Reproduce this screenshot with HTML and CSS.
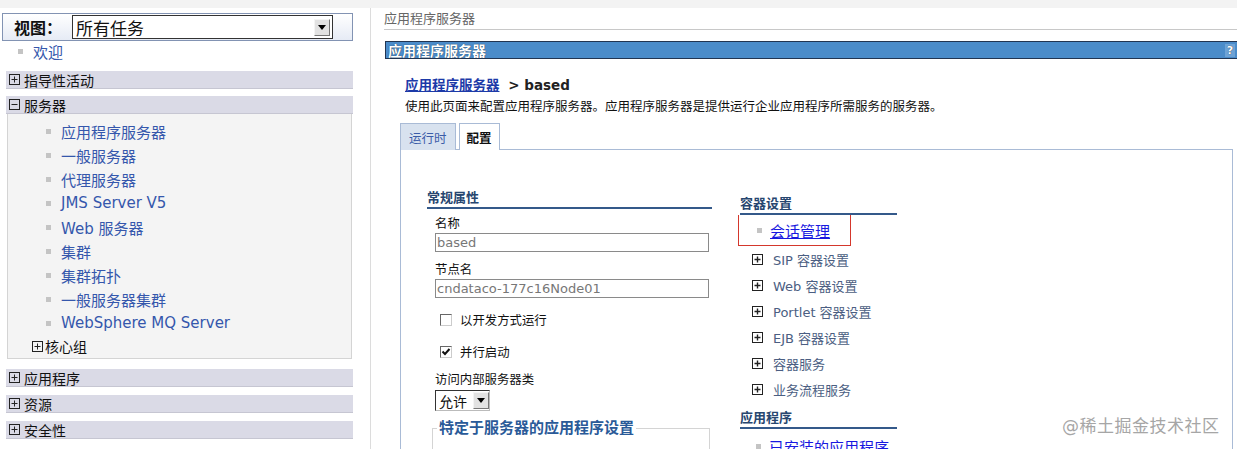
FILE: index.html
```html
<!DOCTYPE html>
<html>
<head>
  <title>应用程序服务器</title>
  <link rel="stylesheet" href="styles.css">
</head>
<body>
  <div class="topstrip"></div>
  <div class="page">
    <div class="nav">
      <div class="viewbar">
        <span class="viewlabel">视图：</span>
        <div class="viewselect">
          <span>所有任务</span>
          <span class="arrowbtn"><svg width="8" height="5" viewBox="0 0 8 5"><path d="M0 0h8L4 5z" fill="#000"/></svg></span>
        </div>
      </div>
      <div class="welcome"><span class="bullet"></span><a>欢迎</a></div>

      <div class="group gap"><svg class="box" viewBox="0 0 11 11"><rect x="0.5" y="0.5" width="10" height="10" fill="none" stroke="#222"/><path d="M2.5 5.5h6M5.5 2.5v6" stroke="#222"/></svg>指导性活动</div>
      <div class="group open"><svg class="box" viewBox="0 0 11 11"><rect x="0.5" y="0.5" width="10" height="10" fill="none" stroke="#222"/><path d="M2.5 5.5h6" stroke="#222"/></svg>服务器</div>
      <div class="groupbody">
        <div class="item"><span class="bullet"></span><a>应用程序服务器</a></div>
        <div class="item"><span class="bullet"></span><a>一般服务器</a></div>
        <div class="item"><span class="bullet"></span><a>代理服务器</a></div>
        <div class="item"><span class="bullet"></span><a>JMS Server V5</a></div>
        <div class="item"><span class="bullet"></span><a>Web 服务器</a></div>
        <div class="item"><span class="bullet"></span><a>集群</a></div>
        <div class="item"><span class="bullet"></span><a>集群拓扑</a></div>
        <div class="item"><span class="bullet"></span><a>一般服务器集群</a></div>
        <div class="item"><span class="bullet"></span><a>WebSphere MQ Server</a></div>
        <div class="subgroup"><svg class="box" viewBox="0 0 11 11"><rect x="0.5" y="0.5" width="10" height="10" fill="none" stroke="#222"/><path d="M2.5 5.5h6M5.5 2.5v6" stroke="#222"/></svg>核心组</div>
      </div>
      <div class="group after"><svg class="box" viewBox="0 0 11 11"><rect x="0.5" y="0.5" width="10" height="10" fill="none" stroke="#222"/><path d="M2.5 5.5h6M5.5 2.5v6" stroke="#222"/></svg>应用程序</div>
      <div class="group"><svg class="box" viewBox="0 0 11 11"><rect x="0.5" y="0.5" width="10" height="10" fill="none" stroke="#222"/><path d="M2.5 5.5h6M5.5 2.5v6" stroke="#222"/></svg>资源</div>
      <div class="group"><svg class="box" viewBox="0 0 11 11"><rect x="0.5" y="0.5" width="10" height="10" fill="none" stroke="#222"/><path d="M2.5 5.5h6M5.5 2.5v6" stroke="#222"/></svg>安全性</div>
    </div>

    <div class="main">
      <div class="crumb">应用程序服务器</div>
      <div class="titlebar"><span>应用程序服务器</span><span class="help">?</span></div>
      <div class="content">
        <div class="heading"><a>应用程序服务器</a> &gt; based</div>
        <div class="desc">使用此页面来配置应用程序服务器。应用程序服务器是提供运行企业应用程序所需服务的服务器。</div>
        <div class="tabs">
          <span class="tab">运行时</span>
          <span class="tab active">配置</span>
        </div>
        <div class="panel">
          <div class="colleft">
            <div class="sectitle">常规属性</div>
            <div class="flabel first">名称</div>
            <div class="textbox">based</div>
            <div class="flabel">节点名</div>
            <div class="textbox">cndataco-177c16Node01</div>
            <div class="check first"><span class="cb"></span>以开发方式运行</div>
            <div class="check"><span class="cb"><svg width="10" height="10" viewBox="0 0 10 10"><path d="M1.5 4.5l2.5 2.5 4.5-5" fill="none" stroke="#111" stroke-width="2"/></svg></span>并行启动</div>
            <div class="flabel third">访问内部服务器类</div>
            <div class="smallselect"><span>允许</span><span class="arrowbtn"><svg width="8" height="5" viewBox="0 0 8 5"><path d="M0 0h8L4 5z" fill="#000"/></svg></span></div>
            <fieldset class="appset">
              <legend>特定于服务器的应用程序设置</legend>
            </fieldset>
          </div>
          <div class="colright">
            <div class="sectitle">容器设置</div>
            <div class="marked"><span class="bullet"></span><a>会话管理</a></div>
            <div class="link"><svg class="box" viewBox="0 0 11 11"><rect x="0.5" y="0.5" width="10" height="10" fill="none" stroke="#222"/><path d="M2.5 5.5h6M5.5 2.5v6" stroke="#222" stroke-width="1.4"/></svg>SIP 容器设置</div>
            <div class="link"><svg class="box" viewBox="0 0 11 11"><rect x="0.5" y="0.5" width="10" height="10" fill="none" stroke="#222"/><path d="M2.5 5.5h6M5.5 2.5v6" stroke="#222" stroke-width="1.4"/></svg>Web 容器设置</div>
            <div class="link"><svg class="box" viewBox="0 0 11 11"><rect x="0.5" y="0.5" width="10" height="10" fill="none" stroke="#222"/><path d="M2.5 5.5h6M5.5 2.5v6" stroke="#222" stroke-width="1.4"/></svg>Portlet 容器设置</div>
            <div class="link"><svg class="box" viewBox="0 0 11 11"><rect x="0.5" y="0.5" width="10" height="10" fill="none" stroke="#222"/><path d="M2.5 5.5h6M5.5 2.5v6" stroke="#222" stroke-width="1.4"/></svg>EJB 容器设置</div>
            <div class="link"><svg class="box" viewBox="0 0 11 11"><rect x="0.5" y="0.5" width="10" height="10" fill="none" stroke="#222"/><path d="M2.5 5.5h6M5.5 2.5v6" stroke="#222" stroke-width="1.4"/></svg>容器服务</div>
            <div class="link"><svg class="box" viewBox="0 0 11 11"><rect x="0.5" y="0.5" width="10" height="10" fill="none" stroke="#222"/><path d="M2.5 5.5h6M5.5 2.5v6" stroke="#222" stroke-width="1.4"/></svg>业务流程服务</div>
            <div class="sectitle second">应用程序</div>
            <div class="plain"><span class="bullet"></span><a>已安装的应用程序</a></div>
          </div>
        </div>
      </div>
      <div class="watermark">@稀土掘金技术社区</div>
    </div>
  </div>
</body>
</html>
```

FILE: styles.css
```css
html, body
{
  margin: 0;
  height: 449px;
  overflow: hidden;
  background: #fff;
  font-family: "DejaVu Sans", "Noto Sans CJK SC", sans-serif;
  color: #111;
}
.topstrip
{
  height: 8px;
  background-color: #f3f3f3;
}
.page
{
  display: flex;
  height: 441px;
}

/* left navigation */
.nav
{
  width: 370px;
  flex: none;
  font-size: 14px;
}
.viewbar
{
  display: flex;
  align-items: center;
  box-sizing: border-box;
  height: 28px;
  margin: 5px 0 0 2px;
  width: 351px;
  border: 1px solid #8293b3;
  background: linear-gradient(#ffffff, #e6ebf5);
}
.viewlabel
{
  font-weight: bold;
  font-size: 16px;
  width: 58px;
  padding-left: 11px;
}
.viewselect
{
  display: flex;
  align-items: center;
  justify-content: space-between;
  box-sizing: border-box;
  width: 261px;
  height: 24px;
  border: 1px solid #333;
  background: #fff;
  font-size: 17px;
  padding-left: 3px;
}
.arrowbtn
{
  display: flex;
  align-items: center;
  justify-content: center;
  box-sizing: border-box;
  width: 16px;
  height: 17px;
  margin-right: 2px;
  background: #e2e2e2;
  border: 1px solid;
  border-color: #f4f4f4 #777 #777 #f4f4f4;
}
.bullet
{
  display: inline-block;
  width: 5px;
  height: 5px;
  background-color: #c4c4c4;
}
.welcome
{
  display: flex;
  align-items: center;
  height: 20px;
  padding-left: 18px;
  font-size: 15px;
}
.welcome .bullet
{
  margin-right: 10px;
}
a
{
  color: #3557ac;
}
.group
{
  display: flex;
  align-items: center;
  box-sizing: border-box;
  height: 18px;
  width: 347px;
  margin: 8px 0 0 6px;
  background-color: #dadae6;
  border-bottom: 1px solid #c6c6d2;
  font-size: 14px;
}
.group.open
{
  margin-top: 7px;
}
.group.gap
{
  margin-top: 10px;
}
.group.after
{
  margin-top: 10px;
}
.box
{
  width: 11px;
  height: 11px;
  margin: 0 4px 0 3px;
  flex: none;
}
.groupbody
{
  box-sizing: border-box;
  width: 345px;
  height: 245px;
  margin-left: 7px;
  padding-top: 5px;
  background-color: #f4f4f4;
  border: 1px solid #d4d4d4;
  border-top: none;
}
.item
{
  display: flex;
  align-items: center;
  height: 24px;
  padding-left: 38px;
  font-size: 15px;
}
.item .bullet
{
  margin-right: 10px;
}
.subgroup
{
  display: flex;
  align-items: center;
  height: 22px;
  padding-left: 22px;
  font-size: 14px;
}
.subgroup .box
{
  margin-left: 2px;
  margin-right: 2px;
}

/* main area */
.main
{
  flex: 1;
  border-left: 1px solid #dcdcdc;
  position: relative;
}
.crumb
{
  margin: 3px 0 0 13px;
  line-height: 16px;
  padding-bottom: 2px;
  border-bottom: 1px solid #c8c8c8;
  font-size: 13px;
  color: #666;
}
.titlebar
{
  display: flex;
  justify-content: space-between;
  align-items: center;
  box-sizing: border-box;
  height: 18px;
  margin: 11px 0 0 14px;
  background-color: #4b8cca;
  border-top: 1px solid #223552;
  border-bottom: 1px solid #223552;
  border-left: 1px solid #223552;
  color: #fff;
  font-weight: bold;
  font-size: 14px;
  padding-left: 2px;
  text-shadow: 0 0 1px #123;
}
.help
{
  font-size: 11px;
  width: 10px;
  text-align: center;
  background-color: #6ea3d6;
  margin-right: 2px;
  line-height: 13px;
}
.content
{
  margin-left: 29px;
}
.heading
{
  margin: 18px 0 0 5px;
  line-height: 16px;
  font-size: 13.5px;
  font-weight: bold;
  color: #222;
}
.heading a
{
  color: #1c3aa8;
  text-decoration: underline;
  margin-right: 4px;
}
.desc
{
  margin: 6px 0 0 5px;
  line-height: 16px;
  font-size: 12.5px;
}
.tabs
{
  display: flex;
  gap: 3px;
  margin-top: 8px;
  height: 26px;
}
.tab
{
  display: flex;
  align-items: center;
  box-sizing: border-box;
  height: 27px;
  padding: 0 8px;
  border: 1px solid #a9bbd6;
  border-bottom: none;
  background-color: #d8e2ef;
  color: #3a5ca8;
  font-size: 12.5px;
}
.tab.active
{
  padding: 0 7px;
  background-color: #fff;
  color: #111;
  font-weight: bold;
  position: relative;
  z-index: 1;
}
.panel
{
  display: flex;
  box-sizing: border-box;
  height: 300px;
  margin-right: 4px;
  border: 1px solid #a9bbd6;
  border-bottom: none;
  padding-left: 26px;
}
.sectitle
{
  line-height: 16px;
  padding-bottom: 1px;
  border-bottom: 2px solid #34598a;
  font-size: 13px;
  font-weight: bold;
  color: #27466f;
}
.colleft
{
  width: 285px;
  padding-top: 40px;
}
.flabel
{
  margin: 10px 0 0 8px;
  line-height: 16px;
  font-size: 12.4px;
}
.flabel.first
{
  margin-top: 7px;
}
.flabel.third
{
  margin-top: 12px;
}
.textbox
{
  box-sizing: border-box;
  width: 274px;
  height: 19px;
  margin: 1px 0 0 8px;
  border: 1px solid #8a8a8a;
  color: #777;
  font-size: 13px;
  line-height: 17px;
  padding-left: 1px;
}
.check
{
  display: flex;
  align-items: center;
  height: 16px;
  margin: 16px 0 0 13px;
  font-size: 12.4px;
}
.check.first
{
  margin-top: 14px;
}
.cb
{
  display: flex;
  align-items: center;
  justify-content: center;
  box-sizing: border-box;
  width: 12px;
  height: 12px;
  margin-right: 8px;
  border: 1px solid;
  border-color: #666 #ccc #ccc #666;
  background: #fff;
}
.smallselect
{
  display: flex;
  align-items: center;
  justify-content: space-between;
  box-sizing: border-box;
  width: 55px;
  height: 21px;
  margin: 2px 0 0 8px;
  border: 1px solid #333;
  border-color: #333 #bbb #bbb #333;
  font-size: 14px;
  padding-left: 3px;
}
.smallselect .arrowbtn
{
  margin-right: 0;
}
.appset
{
  margin: 8px 0 0 5px;
  padding: 0;
  width: 276px;
  height: 30px;
  border: 1px solid #d4d4d4;
}
.appset legend
{
  padding: 0 2px;
  margin-left: 4px;
  font-size: 15px;
  font-weight: bold;
  color: #2a5a98;
  line-height: 18px;
}
.colright
{
  width: 157px;
  margin-left: 28px;
  padding-top: 46px;
}
.marked
{
  display: flex;
  align-items: center;
  box-sizing: border-box;
  width: 113px;
  height: 31px;
  margin-left: -2px;
  border: 1px solid #d4372c;
  border-top: none;
  padding-left: 18px;
  font-size: 15px;
}
.marked .bullet, .plain .bullet
{
  margin-right: 8px;
}
.marked a, .plain a
{
  color: #1818e0;
  text-decoration: underline;
}
.link
{
  display: flex;
  align-items: center;
  height: 26px;
  font-size: 13px;
  color: #4b5e82;
}
.link .box
{
  margin: 0 10px 0 12px;
}
.sectitle.second
{
  margin-top: 8px;
}
.plain
{
  display: flex;
  align-items: center;
  height: 20px;
  padding-left: 16px;
  margin-top: 7px;
  font-size: 15px;
}
.watermark
{
  position: absolute;
  left: 691px;
  top: 404px;
  font-size: 17px;
  color: #a6a6a6;
  letter-spacing: 0.5px;
}
```
